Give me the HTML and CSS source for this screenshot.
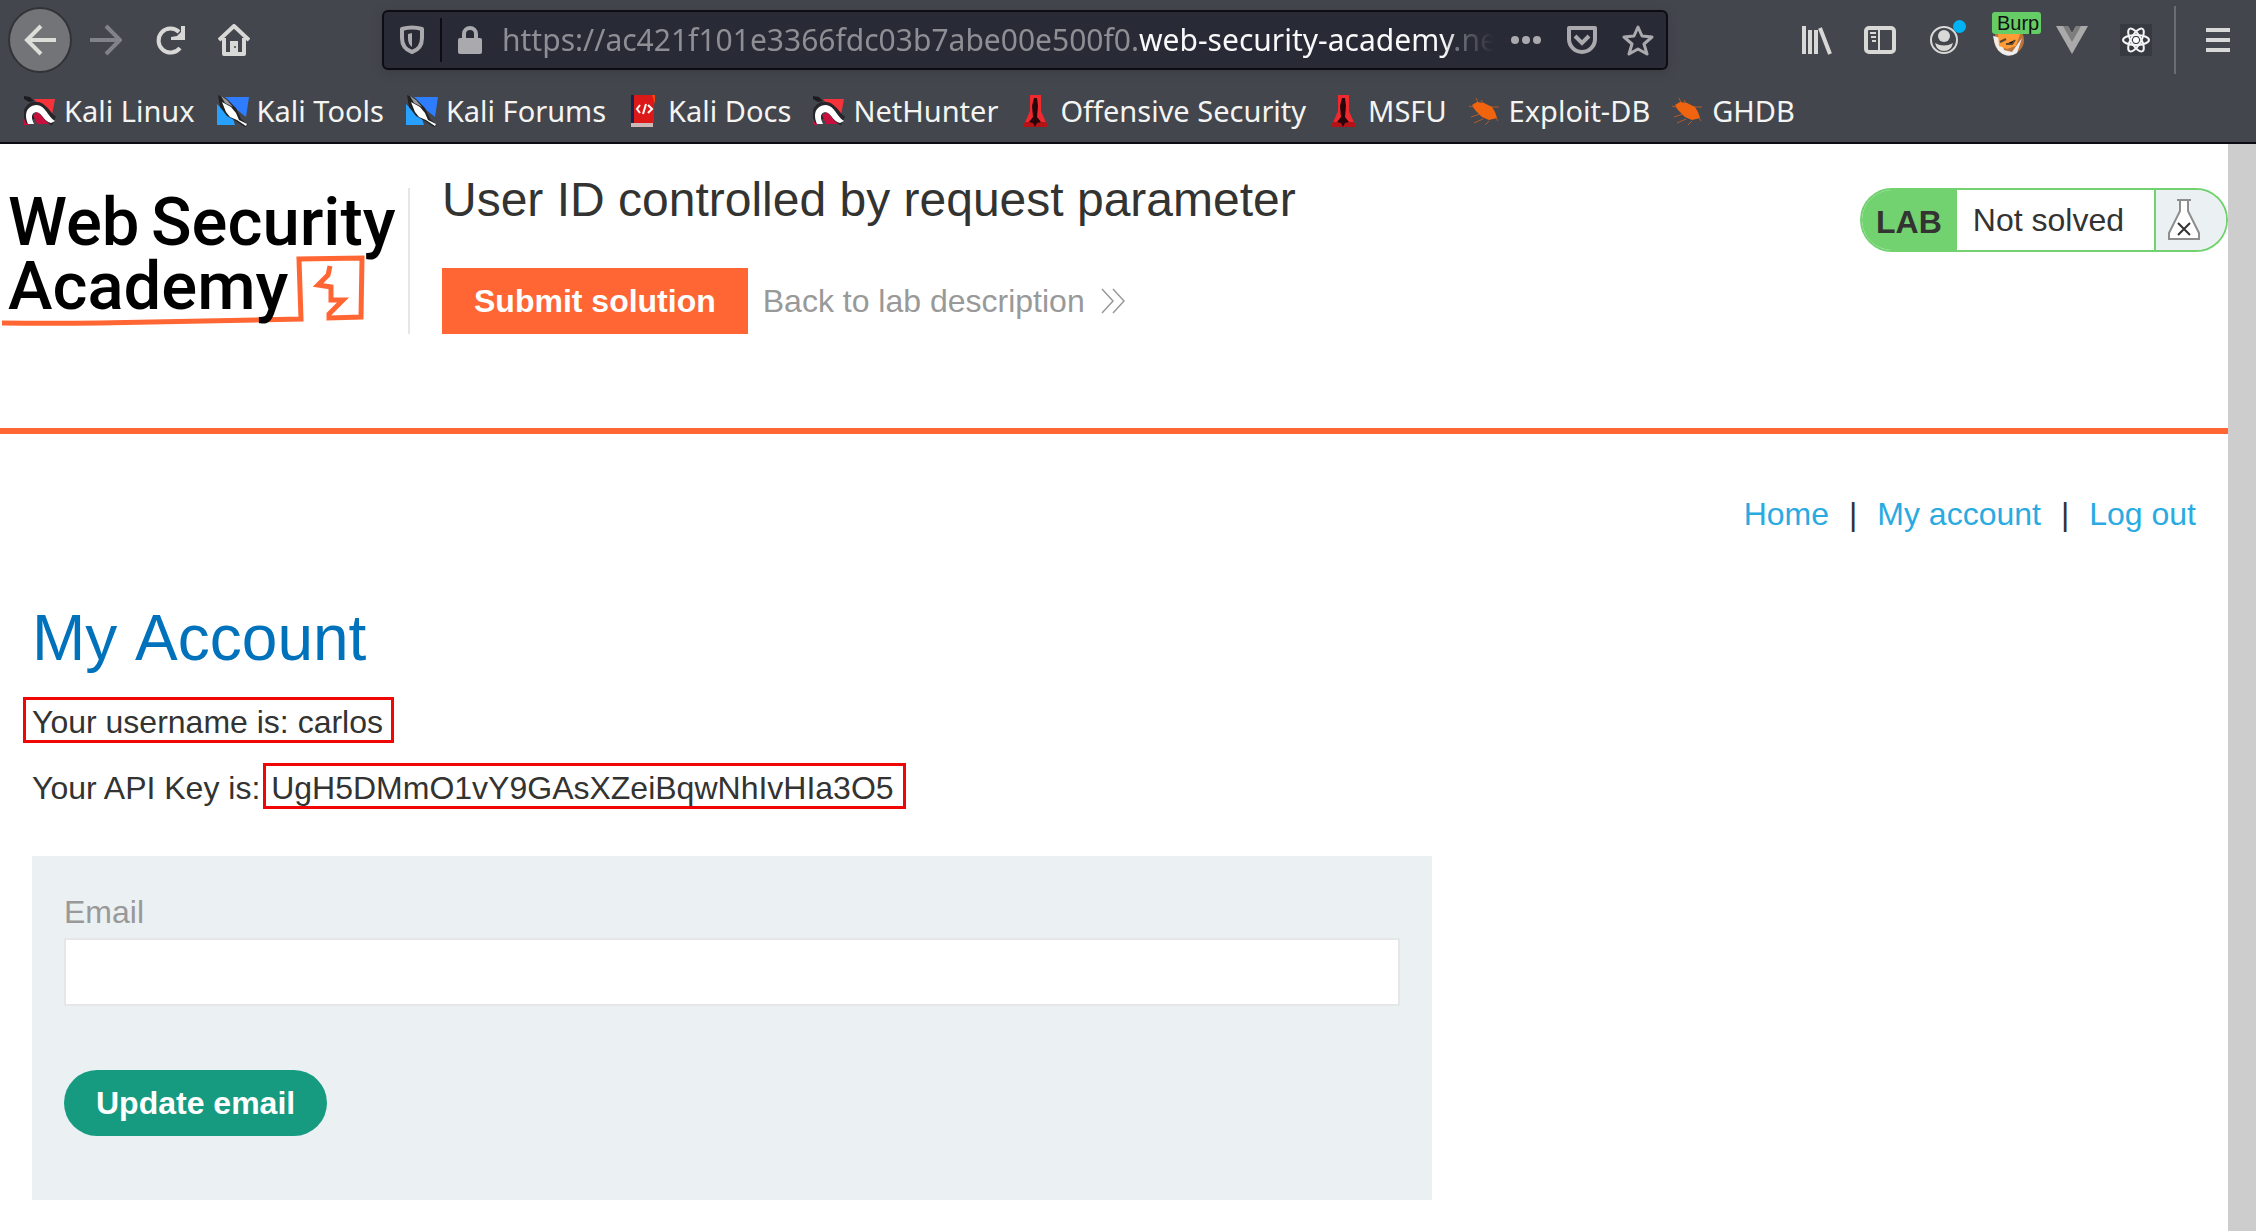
FILE: index.html
```html
<!DOCTYPE html>
<html lang="en">
<head>
<meta charset="utf-8">
<title>User ID controlled by request parameter</title>
<link rel="stylesheet" href="styles.css">
</head>
<body>
<svg class="defs" aria-hidden="true">
  <symbol id="kali" viewBox="0 0 32 32">
    <path fill="#f5333a" d="M10 4h21l-3 16-4 4-8-12z"/>
    <path fill="#c8103f" d="M0 24h5v6H0zM12 17l5-1 9 13H14z"/>
    <path fill="none" stroke="#26262a" stroke-width="10" d="M7 26C1 17 7 10 14 12c7 2 9 11 16 14"/>
    <path fill="#1c1c20" d="M0 1l6 1 4 4-5 1-5-3z"/>
    <path fill="#c8103f" d="M9 20l6-2 7 11h-9z"/>
    <path fill="#fff" d="M4 29C-1 18 4 10 13 10c9 1 10 11 18 16l-4 2c-8-2-9-11-15-11-5 1-5 6-2 12z"/>
  </symbol>
  <symbol id="tools" viewBox="0 0 32 32">
    <path fill="#2f7dff" d="M8 2h24l-3 20-10-8z"/>
    <path fill="#27a0ff" d="M0 9l16 15 2 6H0z"/>
    <path fill="#222" d="M1 0l9 4 9 9 5 11 7 6-3 2-9-6-9-5-7-9z"/>
    <path fill="#fff" d="M5 7l9 5 5 6 3 7 8 4-1 2-9-6-7-3-4-5z"/>
    <path fill="#999" d="M4 1l6 4 6 7-8-4z"/>
  </symbol>
  <symbol id="spike" viewBox="0 0 32 32">
    <path fill="#f0292e" d="M10 0h11v16l7 16H3l7-16z"/>
    <path fill="#b51216" d="M5 27h21l2 5H3z"/>
    <path fill="#26060a" d="M14 3h3l1 8-1 11 4 5-4 1-2 4-2-4-4-1 4-5-1-11z"/>
  </symbol>
  <symbol id="bug" viewBox="0 0 32 32">
    <path fill="none" stroke="#b45a28" stroke-width="1" d="M0 11l8 2M7 3l3 7M12 5l4 6M2 22l9-3M5 28l9-4M16 30l4-4M21 12h9M25 20l4 6"/>
    <path fill="#f0640f" d="M3 10l5-3 7 1 8 4 3 5 2 6-8 2-7-3-7-7z"/>
  </symbol>
</svg>

<header class="browser">
  <div class="toolbar">
    <button class="tool back" aria-label="Back"><svg width="32" height="32" viewBox="0 0 32 32"><path fill="none" stroke="#ddddda" stroke-width="4" d="M32 16H3M17 2L3 16l14 14"/></svg></button>
    <button class="tool" aria-label="Forward"><svg width="32" height="32" viewBox="0 0 32 32"><path fill="none" stroke="#828388" stroke-width="4" d="M0 16h29M16 2l14 14-14 14"/></svg></button>
    <button class="tool" aria-label="Reload"><svg width="32" height="32" viewBox="0 0 32 32"><path fill="none" stroke="#d8d8d6" stroke-width="4" d="M25 8a12 12 0 1 0 1 16"/><path fill="#d8d8d6" d="M27 2h4v14H17v-3l6-1 4-4z"/></svg></button>
    <button class="tool" aria-label="Home"><svg width="32" height="32" viewBox="0 0 32 32"><path fill="none" stroke="#d8d8d6" stroke-width="4" stroke-linejoin="round" d="M1 16L16 2l15 14M6 14v16h20V14"/><path fill="#d8d8d6" d="M12 30V17h8v13z"/><circle cx="17" cy="23" r="1" fill="#444"/></svg></button>
    <div class="urlbar">
      <svg width="28" height="32" viewBox="0 0 28 32"><path fill="none" stroke="#aaaaae" stroke-width="4" stroke-linejoin="round" d="M4 5q10-3 20 0v9c0 8-4 12-10 14C8 26 4 22 4 14z"/><path fill="#aaaaae" d="M14 9v14c-3-2-4-5-4-9v-4z"/></svg>
      <span class="sep"></span>
      <svg width="24" height="32" viewBox="0 0 24 32"><rect y="14" width="24" height="16" rx="2" fill="#aaaaae"/><path fill="none" stroke="#aaaaae" stroke-width="4" d="M6 15V10a6 6 0 0 1 12 0v5"/></svg>
      <span class="url">https://ac421f101e3366fdc03b7abe00e500f0.<b>web-security-academy</b>.net</span>
      <button class="tool" aria-label="Page actions"><svg width="32" height="32" viewBox="0 0 32 32"><g fill="#aaaaae"><circle cx="5" cy="16" r="4"/><circle cx="16" cy="16" r="4"/><circle cx="27" cy="16" r="4"/></g></svg></button>
      <button class="tool" aria-label="Save to Pocket"><svg width="32" height="32" viewBox="0 0 32 32"><path fill="none" stroke="#aaaaae" stroke-width="4" stroke-linejoin="round" d="M3 4h26v11a13 13 0 0 1-26 0z"/><path fill="none" stroke="#aaaaae" stroke-width="4" d="M9 12l7 7 7-7"/></svg></button>
      <button class="tool" aria-label="Bookmark"><svg width="32" height="32" viewBox="0 0 32 32"><path fill="none" stroke="#aaaaae" stroke-width="3" stroke-linejoin="round" d="M16 3l4 9 10 1-8 7 3 10-9-5-9 5 3-10-8-7 10-1z"/></svg></button>
    </div>
    <div class="extras">
      <button class="tool" aria-label="Library"><svg width="32" height="32" viewBox="0 0 32 32"><path fill="none" stroke="#d8d8d6" stroke-width="4" d="M4 2v28M10 6v24M16 6v24M20 4l10 26"/></svg></button>
      <button class="tool" aria-label="Sidebars"><svg width="32" height="32" viewBox="0 0 32 32"><rect x="2" y="4" width="28" height="24" rx="3" fill="none" stroke="#d8d8d6" stroke-width="4"/><path stroke="#d8d8d6" stroke-width="2" d="M15 4v24M6 9h6M7 13h5M8 17h4"/></svg></button>
      <button class="tool" aria-label="Account"><svg width="32" height="32" viewBox="0 0 32 32"><circle cx="16" cy="16" r="13" fill="none" stroke="#d8d8d6" stroke-width="2"/><circle cx="16" cy="12" r="6" fill="#d8d8d6"/><path fill="#d8d8d6" d="M7 19q9 5 18 0-2 8-9 8t-9-8z"/></svg><span class="dot"></span></button>
      <button class="tool" aria-label="FoxyProxy"><svg width="32" height="32" viewBox="0 0 32 32"><circle cx="17" cy="16" r="15" fill="#b9733b"/><path fill="#eee" d="M1 12l8 2 3 12 8 2 10-14-5 15q-9 6-17-1-5-4-7-16z"/><path fill="#ff9c35" d="M6 10h22l-4 12-9 3-8-3z"/><path stroke="#5a4632" stroke-width="2" d="M8 18l6-3M14 20h6l3-4"/></svg><span class="badge">Burp</span></button>
      <button class="tool" aria-label="Vue devtools"><svg width="32" height="32" viewBox="0 0 32 32"><path fill="#aaa" d="M0 2h12l4 7 4-7h12L16 30z"/><path fill="#7d7d7d" d="M7 2h5l4 7 4-7h5l-9 16z"/></svg></button>
      <button class="tool" aria-label="React devtools"><svg width="32" height="32" viewBox="0 0 32 32"><path fill="#383a42" d="M0 0h32v32H0z"/><g fill="none" stroke="#f4f4f4" stroke-width="2"><ellipse cx="16" cy="16" rx="13" ry="5"/><ellipse cx="16" cy="16" rx="13" ry="5" transform="rotate(60 16 16)"/><ellipse cx="16" cy="16" rx="13" ry="5" transform="rotate(120 16 16)"/></g><circle cx="16" cy="16" r="3" fill="#fff"/></svg></button>
    </div>
    <span class="rule"></span>
    <button class="tool" aria-label="Menu"><svg width="24" height="32" viewBox="0 0 24 32"><path stroke="#d8d8d6" stroke-width="4" d="M0 6h24M0 16h24M0 26h24"/></svg></button>
  </div>
  <nav class="bookmarks" aria-label="Bookmarks">
    <a href="#"><svg><use href="#kali"/></svg>Kali Linux</a>
    <a href="#"><svg><use href="#tools"/></svg>Kali Tools</a>
    <a href="#"><svg><use href="#tools"/></svg>Kali Forums</a>
    <a href="#"><svg viewBox="0 0 32 32"><path fill="#dc1818" d="M6 0h20v28H6z"/><path fill="#17234f" d="M3 0h3v28H3z"/><path fill="#f04a10" d="M24 0h3v9z"/><path fill="#ccb8b8" d="M3 28h22v4H3z"/><path fill="none" stroke="#fff" stroke-width="2" d="M12 10l-3 4 3 4M18 9l-3 10M20 10l4 4-4 4"/></svg>Kali Docs</a>
    <a href="#"><svg><use href="#kali"/></svg>NetHunter</a>
    <a href="#"><svg><use href="#spike"/></svg>Offensive Security</a>
    <a href="#"><svg><use href="#spike"/></svg>MSFU</a>
    <a href="#"><svg><use href="#bug"/></svg>Exploit-DB</a>
    <a href="#"><svg><use href="#bug"/></svg>GHDB</a>
  </nav>
</header>

<div class="viewport">
  <div class="page">
    <header class="lab">
      <a class="logo" href="#">
        <svg width="408" height="146" viewBox="0 0 408 146" role="img" aria-label="Web Security Academy">
          <path fill="none" stroke="#ff6633" stroke-width="5" d="M2 135q70 1 150-1l149-3-2-60 63-1-1 59-32 1v-4l14-14h-12V99l-13-2 10-10 2-9"/>
          <g class="logo-text"><text x="8" y="57">Web</text><text x="151" y="57">Security</text><text x="8" y="121">Academy</text></g>
        </svg>
      </a>
      <div class="title">
        <h2>User ID controlled by request parameter</h2>
        <div class="actions">
          <button class="submit">Submit solution</button>
          <a class="return" href="#">Back to lab description
            <svg width="24" height="26" viewBox="0 0 24 26"><path fill="none" stroke="#999" stroke-width="1.5" d="M1 1l11 12L1 25M12 1l11 12-11 12"/></svg></a>
        </div>
      </div>
      <div class="status">
        <span class="tag">LAB</span>
        <span class="state">Not solved</span>
        <span class="flask"><svg width="32" height="42" viewBox="0 0 32 42"><path fill="#fff" stroke="#8d8d8d" stroke-width="2" d="M12 2v10L1 34v6h30v-6L20 12V2"/><path fill="none" stroke="#8d8d8d" stroke-width="2" d="M9 1h14"/><path stroke="#333" stroke-width="2" d="M10 24l12 12M22 24L10 36"/></svg></span>
      </div>
    </header>
    <main>
      <nav class="links" aria-label="Account"><a href="#">Home</a><span>|</span><a href="#">My account</a><span>|</span><a href="#">Log out</a></nav>
      <h1>My Account</h1>
      <p><span class="mark">Your username is: carlos</span></p>
      <p>Your API Key is: <span class="mark key">UgH5DMmO1vY9GAsXZeiBqwNhIvHIa3O5</span></p>
      <form>
        <label for="email">Email</label>
        <input id="email" type="email">
        <button class="update" type="button">Update email</button>
      </form>
    </main>
  </div>
  <div class="scrollbar"></div>
</div>
</body>
</html>
```
FILE: styles.css
```css
* { box-sizing: border-box; }
body {
  margin: 0;
  min-height: 100vh;
  display: flex;
  flex-direction: column;
  background: #fff;
  color: #333332;
  font: 32px/48px "Liberation Sans", Arial, sans-serif;
}
button { border: 0; padding: 0; background: none; font: inherit; color: inherit; }
a { text-decoration: none; }
svg { display: block; flex: none; }
.defs { position: absolute; width: 0; height: 0; }

/* Browser chrome */
.browser {
  height: 144px;
  background: #43464d;
  border-bottom: 2px solid #0c0c12;
  font: 30px/40px "Noto Sans", sans-serif;
  color: #f4f4f2;
}
.toolbar { display: flex; align-items: center; height: 80px; padding: 0 26px 0 8px; }
.tool { position: relative; flex: none; margin-right: 32px; }
.back {
  display: grid;
  place-items: center;
  width: 64px;
  height: 66px;
  margin-right: 18px;
  border: 2px solid #313339;
  border-radius: 50%;
  background: #737478;
}
.urlbar {
  display: flex;
  align-items: center;
  flex: 1;
  min-width: 0;
  height: 60px;
  margin: 0 132px 0 100px;
  padding: 0 12px 0 14px;
  border: 2px solid #0c0c12;
  border-radius: 6px;
  background: #282a36;
  box-shadow: 0 2px 8px #3a3d42;
}
.urlbar .tool { margin: 0 0 0 24px; }
.urlbar .tool:nth-of-type(1) { margin-left: 16px; }
.sep { width: 2px; height: 44px; margin: 0 16px 0 14px; background: #0c0c12; }
.url {
  flex: 1;
  min-width: 0;
  margin-left: 20px;
  overflow: hidden;
  white-space: nowrap;
  color: #8e8f94;
  mask-image: linear-gradient(to left, transparent, #000 50px);
}
.url b { font-weight: 400; color: #f9f9fa; }
.extras { display: flex; }
.extras .tool:last-child { margin-right: 22px; }
.rule { width: 2px; height: 68px; margin-right: 30px; background: #6c6d72; }
.toolbar > .tool:last-child { margin-right: 0; }
.dot { position: absolute; right: -6px; top: -4px; width: 13px; height: 13px; border-radius: 50%; background: #00b3f4; }
.badge {
  position: absolute;
  left: 0;
  top: -12px;
  padding: 0 2px 0 5px;
  border-radius: 3px;
  background: #66cc66;
  color: #111;
  font: 20px/22px "Liberation Sans", Arial, sans-serif;
}
.bookmarks { display: flex; align-items: center; gap: 22px; height: 62px; padding-left: 24px; font-size: 29px; white-space: nowrap; }
.bookmarks a { display: flex; align-items: center; gap: 8px; color: inherit; }
.bookmarks svg { width: 32px; height: 32px; }

/* Page */
.viewport { display: flex; flex: 1; }
.page { flex: 1; min-width: 0; }
.scrollbar { width: 28px; background: #cdcdcd; }
.lab { display: flex; align-items: flex-start; height: 290px; padding-top: 44px; border-bottom: 6px solid #ff6633; }
.logo { border-right: 2px solid #e6e6e6; }
.logo-text { font: 500 67px Roboto, sans-serif; fill: #000; }
.title { flex: 1; margin: -17px 0 0 32px; }
h2 { margin: 0; font-size: 48px; line-height: 58px; font-weight: 400; }
.actions { display: flex; align-items: center; gap: 15px; margin-top: 39px; }
.submit { height: 66px; padding: 0 32px; background: #ff6633; color: #fff; font-weight: 700; }
.return { display: flex; align-items: center; gap: 16px; color: #999; }
.status {
  display: flex;
  height: 64px;
  overflow: hidden;
  border: 2px solid #72d26f;
  border-radius: 32px;
  line-height: 60px;
}
.tag { padding: 2px 15px 0 14px; background: #72d26f; font-weight: 700; }
.state { padding: 0 30px 0 16px; border-right: 2px solid #72d26f; }
.flask { display: flex; align-items: center; padding: 0 26px 0 12px; background: #ebf0f3; }
main { padding: 56px 32px 32px; }
.links { display: flex; justify-content: flex-end; gap: 20px; }
.links a { color: #29abe2; }
h1 { margin: 60px 0 20px; font-size: 64px; line-height: 80px; font-weight: 400; font-kerning: none; color: #0072bc; }
p { margin: 0 0 18px; }
.mark { margin-left: -9px; padding: 4px 8px 0 6px; border: 3px solid #f10606; }
.key { margin-left: -6px; padding-left: 5px; padding-right: 9px; }
form { display: flex; flex-direction: column; align-items: flex-start; width: 1400px; max-width: 100%; margin-top: 44px; padding: 32px 32px 64px; background: #ebf0f3; }
label { margin-bottom: 2px; color: #999; }
input { width: 100%; height: 68px; padding: 0 16px; border: 2px solid #e6e6e6; background: #fff; font: inherit; }
.update { height: 66px; margin-top: 64px; padding: 0 32px; border-radius: 33px; background: #169b80; color: #fff; font-weight: 700; }
```
